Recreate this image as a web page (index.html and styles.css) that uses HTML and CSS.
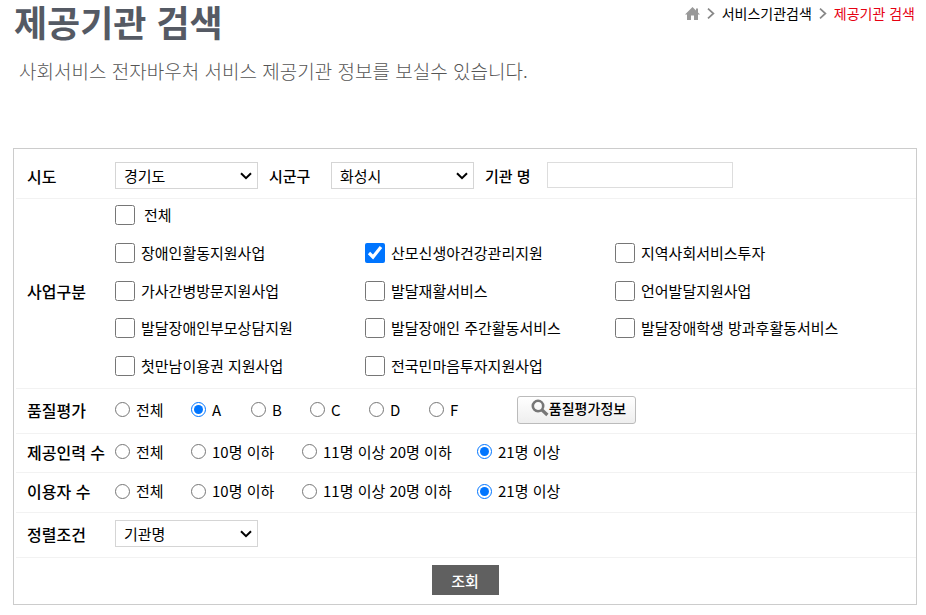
FILE: index.html
```html
<!DOCTYPE html>
<html lang="ko">
<head>
    <meta charset="UTF-8">
    <meta name="viewport" content="width=device-width, initial-scale=1.0">
    <title>제공기관 검색</title>

    <link rel="stylesheet" href="styles.css">
</head>
<body>
    <header class="page-header">
        <div>
            <h1>제공기관 검색</h1>
            <p class="desc">사회서비스 전자바우처 서비스 제공기관 정보를 보실수 있습니다.</p>
        </div>
        <nav class="location">
            <a href="#" aria-label="홈">
                <svg class="home" viewBox="0 0 15 13" width="15" height="13"><path d="M7.5 0 11 3.4V1.5h2v3.9l2 2h-2V13H9V8.6H6V13H2V7.4H0z" fill="#999"/></svg>
            </a>
            <svg class="arrow" viewBox="0 0 8 11" width="8" height="11"><path d="M1 .6 6.4 5.5 1 10.4" fill="none" stroke="#888" stroke-width="1.7"/></svg>
            <a href="#">서비스기관검색</a>
            <svg class="arrow" viewBox="0 0 8 11" width="8" height="11"><path d="M1 .6 6.4 5.5 1 10.4" fill="none" stroke="#888" stroke-width="1.7"/></svg>
            <a href="#" class="current">제공기관 검색</a>
        </nav>
    </header>

    <form class="search-form">
        <div class="row row-region">
            <label class="title" for="sido">시도</label>
            <div class="fields">
                <select id="sido"><option>경기도</option></select>
                <label class="sub-title" for="sigungu">시군구</label>
                <select id="sigungu"><option>화성시</option></select>
                <label class="sub-title" for="orgName">기관 명</label>
                <input type="text" id="orgName">
            </div>
        </div>

        <div class="row row-business">
            <span class="title">사업구분</span>
            <div class="checks">
                <label class="check check-all"><input type="checkbox">전체</label>
                <label class="check"><input type="checkbox">장애인활동지원사업</label>
                <label class="check"><input type="checkbox" checked>산모신생아건강관리지원</label>
                <label class="check"><input type="checkbox">지역사회서비스투자</label>
                <label class="check"><input type="checkbox">가사간병방문지원사업</label>
                <label class="check"><input type="checkbox">발달재활서비스</label>
                <label class="check"><input type="checkbox">언어발달지원사업</label>
                <label class="check"><input type="checkbox">발달장애인부모상담지원</label>
                <label class="check"><input type="checkbox">발달장애인 주간활동서비스</label>
                <label class="check"><input type="checkbox">발달장애학생 방과후활동서비스</label>
                <label class="check"><input type="checkbox">첫만남이용권 지원사업</label>
                <label class="check"><input type="checkbox">전국민마음투자지원사업</label>
            </div>
        </div>

        <div class="row row-quality">
            <span class="title">품질평가</span>
            <div class="grades">
                <label class="radio"><input type="radio" name="grade">전체</label>
                <label class="radio"><input type="radio" name="grade" checked>A</label>
                <label class="radio"><input type="radio" name="grade">B</label>
                <label class="radio"><input type="radio" name="grade">C</label>
                <label class="radio"><input type="radio" name="grade">D</label>
                <label class="radio"><input type="radio" name="grade">F</label>
                <button type="button" class="btn-info">
                    <svg viewBox="0 0 18 18" width="18" height="18"><circle cx="7" cy="7" r="5.2" fill="none" stroke="#777" stroke-width="2.6"/><path d="m11 11 5.4 5" stroke="#777" stroke-width="3.2"/></svg>품질평가정보
                </button>
            </div>
        </div>

        <div class="row row-staff">
            <span class="title">제공인력 수</span>
            <div class="counts">
                <label class="radio"><input type="radio" name="staff">전체</label>
                <label class="radio"><input type="radio" name="staff">10명 이하</label>
                <label class="radio"><input type="radio" name="staff">11명 이상 20명 이하</label>
                <label class="radio"><input type="radio" name="staff" checked>21명 이상</label>
            </div>
        </div>

        <div class="row row-users">
            <span class="title">이용자 수</span>
            <div class="counts">
                <label class="radio"><input type="radio" name="users">전체</label>
                <label class="radio"><input type="radio" name="users">10명 이하</label>
                <label class="radio"><input type="radio" name="users">11명 이상 20명 이하</label>
                <label class="radio"><input type="radio" name="users" checked>21명 이상</label>
            </div>
        </div>

        <div class="row row-sort">
            <label class="title" for="sort">정렬조건</label>
            <div class="fields">
                <select id="sort"><option>기관명</option></select>
            </div>
        </div>

        <div class="actions">
            <button type="submit" class="btn-search">조회</button>
        </div>
    </form>
</body>
</html>
```
FILE: styles.css
```css
* {
    box-sizing: border-box;
}

body {
    margin: 0;
    font-family: "Noto Sans CJK KR", "Noto Sans", sans-serif;
    font-size: 15px;
    line-height: 20px;
    color: #000;
    background-color: #fff;
}

input,
select,
button {
    margin: 0;
    font-family: inherit;
    font-size: 15px;
    color: #000;
}

.page-header {
    display: flex;
    justify-content: space-between;
    align-items: flex-start;
    height: 148px;
    padding: 4px 11px 0 14px;
}

h1 {
    margin: 0;
    font-family: "Liberation Sans", "Noto Sans CJK KR", sans-serif;
    font-size: 36px;
    line-height: 42px;
    color: #555a64;
}

.desc {
    margin: 11px 0 0 5px;
    font-size: 19px;
    line-height: 28px;
    font-weight: 300;
    color: #555;
}

.location {
    display: flex;
    align-items: center;
    gap: 7px;
    font-size: 14px;
    line-height: 18px;
}

.location a {
    color: #000;
    text-decoration: none;
}

.location .current {
    color: #e60012;
}

.home {
    display: block;
}

/* search form */
.search-form {
    margin: 0 9px 0 13px;
    padding-left: 2px;
    border: 1px solid #ccc;
}

.row {
    display: grid;
    grid-template-columns: 88px 1fr;
    align-items: center;
    padding-left: 11px;
    border-bottom: 1px solid #f2f2f2;
}

.title,
.sub-title {
    font-weight: 500;
    white-space: nowrap;
}

.title {
    font-size: 16px;
}

.fields {
    display: flex;
    align-items: flex-start;
    gap: 11px;
}

.sub-title {
    width: 51px;
    line-height: 27px;
}

select {
    width: 143px;
    height: 27px;
    padding: 0 24px 0 8px;
    border: 1px solid #d5d5d5;
    border-radius: 0;
    appearance: none;
    background: #fff url("data:image/svg+xml,%3Csvg xmlns='http://www.w3.org/2000/svg' width='12' height='8'%3E%3Cpath d='M1 1.2 6 6.2 11 1.2' fill='none' stroke='%23000' stroke-width='2'/%3E%3C/svg%3E") no-repeat right 5px center;
}

input[type="text"] {
    width: 186px;
    height: 26px;
    padding: 0 6px;
    border: 1px solid #ddd;
}

.row-region {
    min-height: 50px;
    padding-top: 4px;
}

.row-business {
    min-height: 190px;
    padding-top: 6px;
    padding-bottom: 12px;
}

.checks {
    display: grid;
    grid-template-columns: 250px 250px 1fr;
    align-content: space-between;
    min-height: 171px;
}

.check,
.radio {
    display: flex;
    align-items: center;
    gap: 6px;
    white-space: nowrap;
}

.check-all {
    grid-column: 1 / -1;
    gap: 9px;
}

.check input {
    width: 20px;
    height: 20px;
}

.radio input {
    width: 15px;
    height: 15px;
}

.row-quality,
.row-sort {
    min-height: 45px;
    padding-bottom: 3px;
}

.row-staff {
    min-height: 39px;
    padding-bottom: 3px;
}

.row-users {
    min-height: 40px;
    padding-bottom: 3px;
}

.grades {
    display: grid;
    grid-template-columns: 76px 60px 59px 59px 60px 88px 119px;
}

.counts {
    display: grid;
    grid-template-columns: 76px 111px 175px 1fr;
}

.btn-info {
    display: flex;
    align-items: center;
    justify-content: center;
    height: 28px;
    padding: 0 0 3px 4px;
    border: 1px solid #bbb;
    border-radius: 3px;
    background: linear-gradient(#fff, #eee);
    font-size: 14px;
    font-weight: 500;
}

.actions {
    display: flex;
    justify-content: center;
    padding: 7px 2px 9px 0;
}

.btn-search {
    width: 67px;
    height: 30px;
    padding: 0;
    border: 0;
    background-color: #606060;
    color: #fff;
    font-weight: 500;
}
```
